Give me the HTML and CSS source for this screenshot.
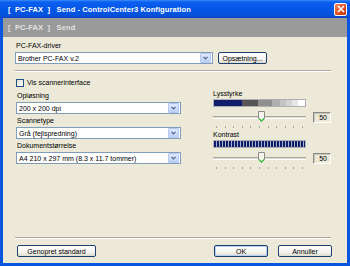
FILE: index.html
```html
<!DOCTYPE html>
<html>
<head>
<meta charset="utf-8">
<link rel="stylesheet" href="styles.css">
</head>
<body>
<div class="window">
  <div class="titlebar">
    <span class="title">[&nbsp; PC-FAX &nbsp;]&nbsp;&nbsp; Send - ControlCenter3 Konfiguration</span>
    <span class="close"><svg width="8" height="8" viewBox="0 0 8 8"><path d="M1 1L7 7M7 1L1 7" stroke="#fff" stroke-width="1.6"/></svg></span>
  </div>
  <div class="band">[&nbsp; PC-FAX &nbsp;]&nbsp;&nbsp; Send</div>
  <div class="content">
    <div class="label">PC-FAX-driver</div>
    <div class="driver-row">
      <div class="select driver"><span class="val">Brother PC-FAX v.2</span><span class="arrow"><svg width="5" height="4" viewBox="0 0 5 4"><path d="M0.5 0.8L2.5 2.8L4.5 0.8" fill="none" stroke="#4d6185" stroke-width="1.2"/></svg></span></div>
      <div class="btn setup">Opsætning...</div>
    </div>
    <div class="sep"></div>
    <div class="check"><span class="box"></span><span>Vis scannerinterface</span></div>
    <div class="cols">
      <div class="left">
        <div class="label">Opløsning</div>
        <div class="select"><span class="val">200 x 200 dpi</span><span class="arrow"><svg width="5" height="4" viewBox="0 0 5 4"><path d="M0.5 0.8L2.5 2.8L4.5 0.8" fill="none" stroke="#4d6185" stroke-width="1.2"/></svg></span></div>
        <div class="label">Scannetype</div>
        <div class="select"><span class="val">Grå (fejlspredning)</span><span class="arrow"><svg width="5" height="4" viewBox="0 0 5 4"><path d="M0.5 0.8L2.5 2.8L4.5 0.8" fill="none" stroke="#4d6185" stroke-width="1.2"/></svg></span></div>
        <div class="label">Dokumentstørrelse</div>
        <div class="select"><span class="val">A4 210 x 297 mm (8.3 x 11.7 tommer)</span><span class="arrow"><svg width="5" height="4" viewBox="0 0 5 4"><path d="M0.5 0.8L2.5 2.8L4.5 0.8" fill="none" stroke="#4d6185" stroke-width="1.2"/></svg></span></div>
      </div>
      <div class="right">
        <div class="label rlabel">Lysstyrke</div>
        <div class="bar bright"></div>
        <div class="slider-row">
          <div class="slider">
            <div class="track"></div>
            <div class="ticks"><i></i><i></i><i></i><i></i><i></i><i></i><i></i><i></i><i></i><i></i><i></i></div>
            <svg class="thumb" width="7" height="11" viewBox="0 0 7 11"><path d="M0.5 0.5H6.5V7.5L3.5 10.5L0.5 7.5Z" fill="#f4f3ee" stroke="#8b8b8b"/><path d="M0.8 7.3L3.5 10L6.2 7.3" fill="none" stroke="#2ec22e" stroke-width="1.2"/></svg>
          </div>
          <div class="valbox">50</div>
        </div>
        <div class="label rlabel">Kontrast</div>
        <div class="bar contrast"></div>
        <div class="slider-row">
          <div class="slider">
            <div class="track"></div>
            <div class="ticks"><i></i><i></i><i></i><i></i><i></i><i></i><i></i><i></i><i></i><i></i><i></i></div>
            <svg class="thumb" width="7" height="11" viewBox="0 0 7 11"><path d="M0.5 0.5H6.5V7.5L3.5 10.5L0.5 7.5Z" fill="#f4f3ee" stroke="#8b8b8b"/><path d="M0.8 7.3L3.5 10L6.2 7.3" fill="none" stroke="#2ec22e" stroke-width="1.2"/></svg>
          </div>
          <div class="valbox">50</div>
        </div>
      </div>
    </div>
    <div class="footer">
      <div class="sep"></div>
      <div class="buttons">
        <div class="btn reset">Genopret standard</div>
        <div class="spacer"></div>
        <div class="btn ok">OK</div>
        <div class="btn cancel">Annuller</div>
      </div>
    </div>
  </div>
</div>
</body>
</html>
```

FILE: styles.css
```css
* { box-sizing: border-box; }
html, body { margin: 0; padding: 0; }
body {
  width: 350px;
  height: 266px;
  overflow: hidden;
  font-family: "Liberation Sans", Arial, sans-serif;
  font-size: 7px;
  color: #000;
}
.window {
  width: 350px;
  height: 266px;
  display: flex;
  flex-direction: column;
  background: #0a55e0;
  padding: 0 3px 3px 3px;
}
.titlebar {
  height: 18px;
  margin: 0 -3px;
  padding: 0 3px 0 8px;
  display: flex;
  align-items: center;
  background: linear-gradient(#3a8cf8 0px, #0b5ff0 2px, #0456e6 9px, #0452de 15px, #0a46c4 18px);
  color: #fff;
}
.title {
  font-weight: bold;
  font-size: 7.5px;
  flex: 1;
  white-space: nowrap;
  letter-spacing: 0.1px;
}
.close {
  width: 13px;
  height: 13px;
  border: 1px solid #fff;
  border-radius: 2px;
  background: linear-gradient(135deg, #f08a60, #dc4a1e 60%, #c93b12);
  display: flex;
  align-items: center;
  justify-content: center;
}
.band {
  height: 19px;
  background: #9a9a9a;
  color: #e2e2e2;
  font-weight: bold;
  font-size: 7.5px;
  letter-spacing: 0.1px;
  display: flex;
  align-items: center;
  padding-left: 5px;
  white-space: nowrap;
}
.content {
  flex: 1;
  background: #ece9d8;
  display: flex;
  flex-direction: column;
  padding: 4px 16px 6px 12px;
}
.label {
  height: 10px;
  line-height: 10px;
  padding-left: 1px;
  white-space: nowrap;
}
.driver-row {
  display: flex;
  align-items: center;
  margin-top: 1px;
  gap: 5px;
}
.select {
  height: 12px;
  background: #fff;
  border: 1px solid #7f9db9;
  display: flex;
  align-items: center;
  justify-content: space-between;
  padding: 1px 1px 1px 2px;
  margin-top: 1px;
  margin-bottom: 2px;
}
.select.driver {
  width: 198px;
  margin: 0;
}
.val { white-space: nowrap; line-height: 9px; }
.arrow {
  width: 11px;
  height: 10px;
  background: linear-gradient(#dfe9fd, #bed0f8);
  border: 1px solid #b6c8ef;
  border-radius: 1px;
  display: flex;
  align-items: center;
  justify-content: center;
}
.btn {
  height: 12px;
  border: 1px solid #1d3f6e;
  border-radius: 2px;
  background: linear-gradient(#ffffff, #f4f3ee 60%, #dedbd0);
  display: flex;
  align-items: center;
  justify-content: center;
  white-space: nowrap;
}
.setup { width: 49px; }
.sep {
  height: 2px;
  border-top: 1px solid #aca899;
  border-bottom: 1px solid #fff;
  margin-top: 6px;
}
.check {
  display: flex;
  align-items: center;
  gap: 3px;
  margin-top: 6px;
  padding-left: 1px;
  height: 9px;
}
.box {
  width: 8px;
  height: 8px;
  border: 1px solid #1c5180;
  background: linear-gradient(135deg, #dcdcd6, #fff);
}
.cols {
  display: flex;
  margin-top: 4px;
}
.left {
  width: 166px;
  display: flex;
  flex-direction: column;
  padding-left: 1px;
}
.right {
  margin-left: 32px;
  width: 118px;
  display: flex;
  flex-direction: column;
  margin-top: -2px;
}
.rlabel { padding-left: 0; }
.bar {
  width: 93px;
  height: 8px;
  border: 1px solid #b0b0b0;
}
.bright {
  background: linear-gradient(90deg,
    #101c6c 0 28px, #555555 28px 44px, #8f8f8f 44px 58px,
    #b0b0b0 58px 66px, #c4c4c4 66px 72px, #d4d4d4 72px 78px,
    #e6e6e6 78px 84px, #ffffff 84px);
}
.contrast {
  background: repeating-linear-gradient(90deg, #0e1d6e 0 2px, #a9b2c9 2px 3px);
}
.slider-row {
  display: flex;
  align-items: flex-start;
  height: 23px;
  padding-top: 5px;
}
.slider {
  position: relative;
  width: 93px;
  height: 18px;
}
.track {
  margin-top: 4px;
  height: 3px;
  border-top: 1px solid #a9a9a0;
  border-bottom: 1px solid #fff;
  background: #dcdad0;
}
.ticks {
  display: flex;
  justify-content: space-between;
  padding: 0 3px;
  margin-top: 7px;
}
.ticks i {
  display: block;
  width: 1px;
  height: 2px;
  background: #a8a8a0;
}
.thumb {
  position: absolute;
  left: 45px;
  top: -1px;
}
.valbox {
  margin-left: 7px;
  width: 18px;
  height: 11px;
  border: 1px solid #8a8a80;
  border-right-color: #fff;
  border-bottom-color: #fff;
  box-shadow: inset 1px 1px 0 #c8c6bc;
  display: flex;
  align-items: center;
  justify-content: flex-end;
  padding-right: 3px;
}
.footer {
  margin-top: auto;
}
.buttons {
  display: flex;
  margin-top: 6px;
  padding-left: 2px;
  gap: 10px;
}
.reset { width: 79px; }
.spacer { flex: 1; }
.ok {
  width: 54px;
  box-shadow: inset 0 0 0 1px #b8cff5;
}
.cancel { width: 54px; margin-right: -1px; }
```
